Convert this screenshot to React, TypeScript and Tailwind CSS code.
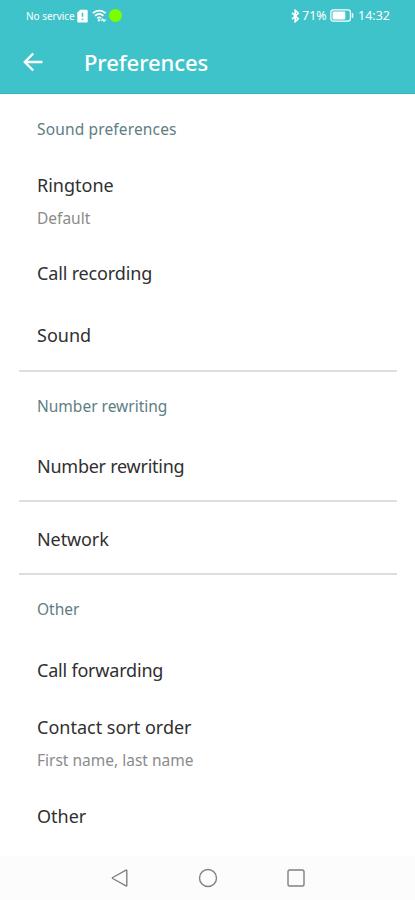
type Item = {
  title: string;
  summary?: string;
  className: string;
  titleClass?: string;
};

type Group = {
  heading?: string;
  headingClass?: string;
  className: string;
  items: Item[];
};

const groups: Group[] = [
  {
    heading: "Sound preferences",
    headingClass: "tracking-[0.15px]",
    className: "h-[276px] pt-[25px]",
    items: [
      { title: "Ringtone", summary: "Default", className: "mt-[34px]" },
      { title: "Call recording", className: "mt-[33px]", titleClass: "tracking-[-0.15px]" },
      { title: "Sound", className: "mt-[38px]" },
    ],
  },
  {
    heading: "Number rewriting",
    className: "h-[128px] pt-[24px]",
    items: [{ title: "Number rewriting", className: "mt-[38px]", titleClass: "tracking-[-0.25px]" }],
  },
  {
    className: "h-[71px] pt-[25px]",
    items: [{ title: "Network", className: "", titleClass: "tracking-[-0.1px]" }],
  },
  {
    heading: "Other",
    className: "h-[281px] pt-[24px]",
    items: [
      { title: "Call forwarding", className: "mt-[39px]", titleClass: "tracking-[-0.2px]" },
      { title: "Contact sort order", summary: "First name, last name", className: "mt-[33px]" },
      { title: "Other", className: "mt-[34px]" },
    ],
  },
];

function StatusBar() {
  return (
    <div className="flex h-[31px] items-center justify-between pr-[24px] pl-[26px]">
      <div className="flex items-center">
        <span className="w-[51px] text-[10px] leading-none tracking-[-0.02px] whitespace-nowrap">No service</span>
        <svg width="11" height="14" viewBox="0 0 11 14">
          <path d="M3.2.7h6.300a1.200 1.200 0 0 1 1.200 1.200v10.300a1.200 1.200 0 0 1-1.200 1.200h-8A1.200 1.200 0 0 1 .3 12.200V3.600z" fill="currentColor" />
          <path d="M5.500 3.800v4M5.500 9.500v1.500" stroke="#3fc3ca" strokeWidth="1.500" />
        </svg>
        <svg className="ml-[4px]" width="15" height="14" viewBox="0 0 15 14" fill="none" stroke="currentColor">
          <path d="M.8 4.200c3.800-3.400 9-3.400 12.800 0M3 6.700c2.600-2.200 5.800-2.200 8.400 0M5.200 9.100c1.300-1 2.700-1 4 0" strokeWidth="1.800" />
          <circle cx="7" cy="11.300" r="1.200" fill="currentColor" stroke="none" />
          <path d="M9.300 11.600l1.400-1.400 1.300 2 1.600-1.700" strokeWidth="1.400" />
        </svg>
        <span className="ml-[2px] size-[13px] rounded-full bg-[#7bff00]" />
      </div>
      <div className="flex items-center">
        <svg width="9" height="14" viewBox="0 0 9 14" fill="none" stroke="currentColor" strokeWidth="1.600">
          <path d="M1 3.800l6.300 6L4.200 12.700V1.300l3.100 2.900L1 10.200" />
        </svg>
        <span className="ml-[2px] w-[28px] pt-px text-[12.5px] leading-none whitespace-nowrap">71%</span>
        <svg width="24" height="13" viewBox="0 0 24 13" fill="none">
          <rect x=".9" y=".9" width="19.500" height="11.200" rx="2.600" stroke="currentColor" strokeWidth="1.200" />
          <rect x="2.600" y="2.600" width="12.700" height="7.800" rx=".8" fill="currentColor" />
          <path d="M22.500 4.200v4.600" stroke="currentColor" strokeWidth="1.500" />
        </svg>
        <span className="ml-[4px] w-[33px] pt-px text-[12.5px] leading-none whitespace-nowrap">14:32</span>
      </div>
    </div>
  );
}

function PreferenceItem({ item }: { item: Item }) {
  return (
    <div className={item.className}>
      <p className={`text-[18px] leading-6 text-[#303030] ${item.titleClass ?? ""}`}>{item.title}</p>
      {item.summary && <p className="mt-[11px] text-[15.5px] leading-5 text-[#8b8b8b]">{item.summary}</p>}
    </div>
  );
}

function NavigationBar() {
  return (
    <nav className="flex h-[45px] items-center justify-center gap-[68px] bg-[#fcfcfc] text-[#808080]">
      <svg width="20" height="20" viewBox="0 0 20 20" fill="none" stroke="currentColor" strokeWidth="1.400" strokeLinejoin="round">
        <path d="M16.800 2.600v14.800q0 .8-.8.4L2.700 10.500q-.7-.5 0-1L16 2.200q.8-.4.8.4z" />
      </svg>
      <svg width="20" height="20" viewBox="0 0 20 20" fill="none" stroke="currentColor" strokeWidth="1.400">
        <circle cx="10" cy="10" r="8.500" />
      </svg>
      <svg width="20" height="20" viewBox="0 0 20 20" fill="none" stroke="currentColor" strokeWidth="1.400">
        <rect x="2" y="2" width="16" height="16" rx="1.800" />
      </svg>
    </nav>
  );
}

export default function App() {
  return (
    <div className="flex h-[900px] w-[415px] flex-col overflow-hidden bg-white font-['Noto_Sans',sans-serif]">
      <header className="h-[94px] shrink-0 border-b border-[#35b5bd] bg-[#3fc3ca] text-white">
        <StatusBar />
        <div className="flex h-[62px] items-center pl-[23px]">
          <svg width="20" height="20" viewBox="0 0 20 20" fill="none" stroke="currentColor" strokeWidth="2.400">
            <path d="M10.200 1.500L1.800 10l8.400 8.500M1.800 10h17.600" />
          </svg>
          <h1 className="ml-[41px] text-[22px] leading-7 font-medium tracking-[-0.05px]">Preferences</h1>
        </div>
      </header>
      <main className="flex-1">
        {groups.map((group, i) => (
          <section key={i}>
            {i > 0 && <div className="mr-[18px] ml-[19px] h-[2px] bg-[#dedede]" />}
            <div className={`pl-[37px] ${group.className}`}>
              {group.heading && (
                <h2 className={`text-[15.5px] leading-5 text-[#607d84] ${group.headingClass ?? ""}`}>{group.heading}</h2>
              )}
              {group.items.map((item) => (
                <PreferenceItem key={item.title} item={item} />
              ))}
            </div>
          </section>
        ))}
      </main>
      <NavigationBar />
    </div>
  );
}
